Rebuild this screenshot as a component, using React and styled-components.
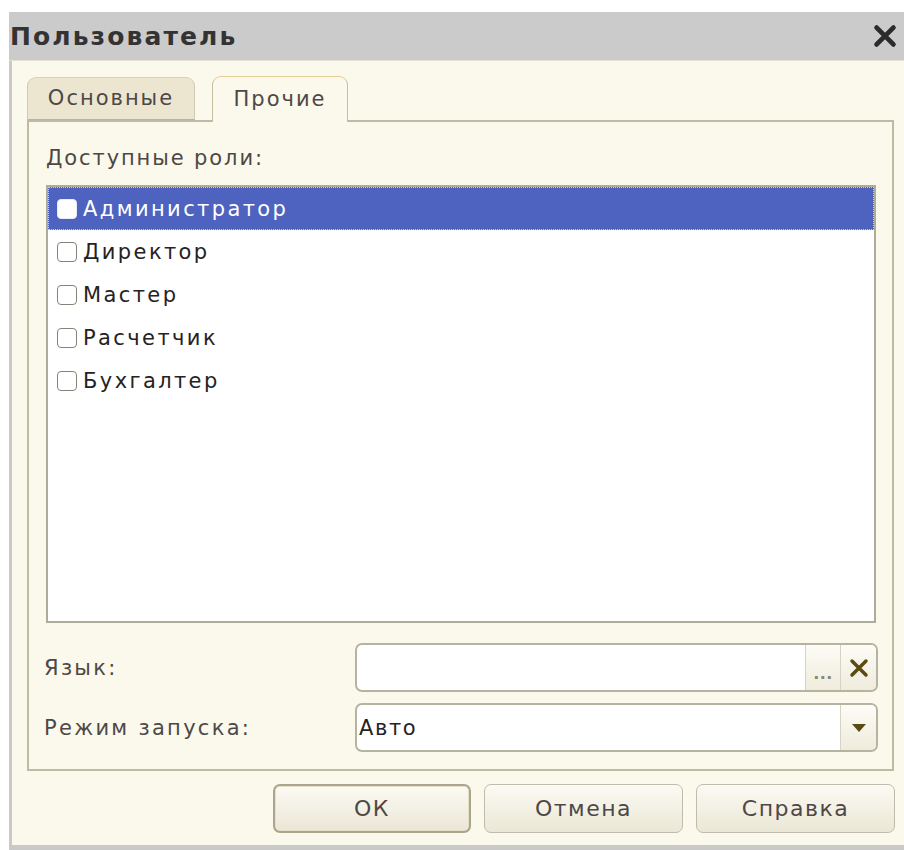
import React, { useState } from "react";
import styled, { createGlobalStyle } from "styled-components";

const ROLES = ["Администратор", "Директор", "Мастер", "Расчетчик", "Бухгалтер"];

const TEXT_FONT = `"DejaVu Sans", "Liberation Sans", sans-serif`;

const GlobalStyle = createGlobalStyle`
  html, body {
    margin: 0;
    padding: 0;
    background: #ffffff;
  }
  body {
    font-family: ${TEXT_FONT};
  }
`;

const Window = styled.div`
  margin: 12px 0 0 9px;
  width: 895px;
  height: 838px;
  box-sizing: border-box;
  display: flex;
  flex-direction: column;
  background: #fbf9eb;
  border-left: 3px solid #c9c9c7;
  border-bottom: 5px solid #c9c9c7;
`;

const TitleBar = styled.div`
  height: 48px;
  margin-left: -3px;
  background: #cbcbcb;
  display: flex;
  align-items: center;
  justify-content: space-between;
  padding: 0 6px 0 1px;
  border-bottom: 1px solid #e4e2d8;
`;

const Title = styled.span`
  font-family: "DejaVu Sans", sans-serif;
  font-weight: bold;
  font-size: 25px;
  color: #333333;
  letter-spacing: 2.1px;
`;

const CloseButton = styled.button`
  border: none;
  background: none;
  padding: 0;
  width: 26px;
  height: 26px;
  display: flex;
  align-items: center;
  justify-content: center;
  cursor: pointer;
`;

const Body = styled.div`
  flex: 1;
  display: flex;
  flex-direction: column;
  padding: 14px 0 0 15px;
`;

const TabRow = styled.div`
  display: flex;
  align-items: flex-end;
  gap: 17px;
  height: 45px;
  position: relative;
  z-index: 1;
`;

const Tab = styled.button`
  font-family: ${TEXT_FONT};
  font-size: 21px;
  letter-spacing: 2px;
  color: #4d4848;
  height: ${({ $active }) => ($active ? "46px" : "43px")};
  width: ${({ $w }) => $w}px;
  margin-bottom: ${({ $active }) => ($active ? "-2px" : "0")};
  padding: 0 0 2px;
  border: 1px solid ${({ $active }) => ($active ? "#c6bf9f" : "#cfcab4")};
  border-bottom: ${({ $active }) => ($active ? "none" : "1px solid #b7b4a0")};
  border-top-color: ${({ $active }) => ($active ? "#e2cf97" : "#d8d2b8")};
  border-radius: 9px 9px 0 0;
  background: ${({ $active }) => ($active ? "#fbf9eb" : "#ece6d1")};
  cursor: pointer;
`;

const Panel = styled.div`
  width: 867px;
  height: 651px;
  box-sizing: border-box;
  border: 2px solid #bdbaa6;
  padding: 24px 18px 0 17px;
  display: flex;
  flex-direction: column;
`;

const Label = styled.div`
  font-size: 21px;
  letter-spacing: 1.9px;
  color: #4d4848;
  height: 39px;
`;

const RoleList = styled.div`
  width: 830px;
  height: 438px;
  box-sizing: border-box;
  border: 2px solid #aeab98;
  background: #ffffff;
  display: flex;
  flex-direction: column;
`;

const RoleRow = styled.label`
  height: 43px;
  box-sizing: border-box;
  display: flex;
  align-items: center;
  padding-left: 9px;
  font-size: 21px;
  letter-spacing: 2.4px;
  color: ${({ $selected }) => ($selected ? "#ffffff" : "#262222")};
  background: ${({ $selected }) => ($selected ? "#4d63bf" : "transparent")};
  outline: ${({ $selected }) => ($selected ? "1px dotted #c8d0ec" : "none")};
  outline-offset: -1px;
  cursor: default;
`;

const CheckBox = styled.span`
  width: 20px;
  height: 20px;
  box-sizing: border-box;
  margin-right: 6px;
  border-radius: 4px;
  border: 1.5px solid ${({ $selected }) => ($selected ? "#e8ecf8" : "#86837a")};
  background: #ffffff;
  flex-shrink: 0;
`;

const FieldGrid = styled.div`
  margin-top: 20px;
  display: grid;
  grid-template-columns: 309px 523px;
  row-gap: 11px;
  align-items: center;
`;

const FieldLabel = styled.div`
  margin-left: -2px;
  font-size: 21px;
  letter-spacing: 2.3px;
  color: #4d4848;
`;

const Field = styled.div`
  height: 49px;
  box-sizing: border-box;
  border: 2px solid #b6b3a1;
  border-radius: 7px;
  background: #ffffff;
  display: flex;
  overflow: hidden;
`;

const FieldValue = styled.div`
  flex: 1;
  display: flex;
  align-items: center;
  padding-left: 2px;
  font-size: 21px;
  letter-spacing: 1.6px;
  color: #262222;
`;

const FieldButton = styled.button`
  width: ${({ $w }) => $w || 36}px;
  border: none;
  border-left: 1px solid #d6d3c2;
  padding: 0;
  background: linear-gradient(#fdfcf6, #efecdc);
  display: flex;
  align-items: center;
  justify-content: center;
  font-family: ${TEXT_FONT};
  cursor: pointer;
`;

const Dots = styled.span`
  font-size: 16px;
  font-weight: bold;
  color: #8a8674;
  letter-spacing: 0.5px;
  margin-top: 12px;
`;

const Footer = styled.div`
  display: flex;
  justify-content: flex-end;
  gap: 13px;
  padding: 13px 9px 0 0;
`;

const Button = styled.button`
  width: ${({ $w }) => $w}px;
  height: 49px;
  box-sizing: border-box;
  font-family: ${TEXT_FONT};
  font-size: 22px;
  letter-spacing: 1.5px;
  color: #4d4848;
  border: ${({ $default }) => ($default ? "2px solid #a9a58f" : "1.5px solid #bfbcab")};
  border-radius: 7px;
  background: linear-gradient(#fbfaf3, #ebe7d6);
  box-shadow: ${({ $default }) => ($default ? "inset 0 0 0 1px #e6e0c6" : "none")};
  cursor: pointer;
`;

function CrossIcon({ size, color, stroke }) {
  return (
    <svg width={size} height={size} viewBox="0 0 20 20">
      <path
        d="M3 3 L17 17 M17 3 L3 17"
        stroke={color}
        strokeWidth={stroke}
        strokeLinecap="round"
      />
    </svg>
  );
}

function Caret() {
  return (
    <svg width="16" height="10" viewBox="0 0 16 10">
      <path d="M1 1 H15 L8 9 Z" fill="#5a4a14" />
    </svg>
  );
}

export default function App() {
  const [tab, setTab] = useState("other");
  const [checked, setChecked] = useState({});

  return (
    <>
      <GlobalStyle />
      <Window>
        <TitleBar>
          <Title>Пользователь</Title>
          <CloseButton aria-label="Закрыть">
            <CrossIcon size={24} color="#2b2b2b" stroke={4} />
          </CloseButton>
        </TitleBar>
        <Body>
          <TabRow>
            <Tab $w={168} $active={tab === "main"} onClick={() => setTab("main")}>
              Основные
            </Tab>
            <Tab $w={136} $active={tab === "other"} onClick={() => setTab("other")}>
              Прочие
            </Tab>
          </TabRow>
          <Panel>
            <Label>Доступные роли:</Label>
            <RoleList>
              {ROLES.map((role, i) => (
                <RoleRow key={role} $selected={i === 0}>
                  <CheckBox
                    $selected={i === 0}
                    onClick={() => setChecked({ ...checked, [role]: !checked[role] })}
                  />
                  {role}
                </RoleRow>
              ))}
            </RoleList>
            <FieldGrid>
              <FieldLabel>Язык:</FieldLabel>
              <Field>
                <FieldValue />
                <FieldButton $w={35}>
                  <Dots>...</Dots>
                </FieldButton>
                <FieldButton $w={36}>
                  <CrossIcon size={20} color="#5b4a12" stroke={3.5} />
                </FieldButton>
              </Field>
              <FieldLabel>Режим запуска:</FieldLabel>
              <Field>
                <FieldValue>Авто</FieldValue>
                <FieldButton $w={36}>
                  <Caret />
                </FieldButton>
              </Field>
            </FieldGrid>
          </Panel>
          <Footer>
            <Button $w={198} $default>
              ОК
            </Button>
            <Button $w={199}>Отмена</Button>
            <Button $w={199}>Справка</Button>
          </Footer>
        </Body>
      </Window>
    </>
  );
}
